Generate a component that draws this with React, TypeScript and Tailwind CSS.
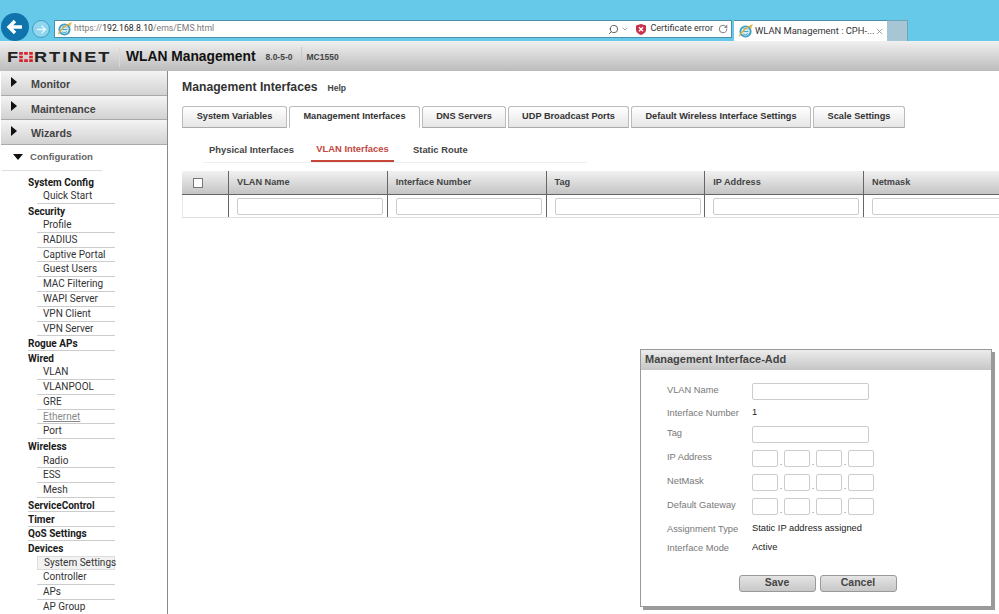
import type { ReactNode } from "react";
import { ChevronDown, RotateCw, Search, X } from "lucide-react";

const sans = "font-['Liberation_Sans',Arial,sans-serif]";
const navFont = "font-['Roboto',sans-serif]";

type NavEntry = { label: string; head?: boolean; muted?: boolean; active?: boolean; line?: boolean };

const navItems: NavEntry[] = [
  { label: "System Config", head: true },
  { label: "Quick Start" },
  { label: "Security", head: true },
  { label: "Profile" },
  { label: "RADIUS" },
  { label: "Captive Portal" },
  { label: "Guest Users" },
  { label: "MAC Filtering" },
  { label: "WAPI Server" },
  { label: "VPN Client" },
  { label: "VPN Server" },
  { label: "Rogue APs", head: true, line: true },
  { label: "Wired", head: true },
  { label: "VLAN" },
  { label: "VLANPOOL" },
  { label: "GRE" },
  { label: "Ethernet", muted: true },
  { label: "Port" },
  { label: "Wireless", head: true },
  { label: "Radio" },
  { label: "ESS" },
  { label: "Mesh" },
  { label: "ServiceControl", head: true, line: true },
  { label: "Timer", head: true, line: true },
  { label: "QoS Settings", head: true, line: true },
  { label: "Devices", head: true },
  { label: "System Settings", active: true },
  { label: "Controller" },
  { label: "APs" },
  { label: "AP Group" },
];

const tabs = [
  { label: "System Variables", width: "w-[105px]" },
  { label: "Management Interfaces", width: "w-[131px]", active: true },
  { label: "DNS Servers", width: "w-[84px]" },
  { label: "UDP Broadcast Ports", width: "w-[121px]" },
  { label: "Default Wireless Interface Settings", width: "w-[180px]" },
  { label: "Scale Settings", width: "w-[92px]" },
];

const columns = ["VLAN Name", "Interface Number", "Tag", "IP Address", "Netmask"];

function GlobeIcon() {
  return (
    <svg viewBox="0 0 16 16" className="h-[15px] w-[15px] shrink-0">
      <circle cx="8" cy="8" r="5.5" fill="#d8eef5" stroke="#3f9fc4" strokeWidth="2" />
      <path d="M5 8h6M5.5 5.5c2-1.5 4-1 5 .5M5.5 10.5c2 1.5 4 1 5-.5" stroke="#3f9fc4" strokeWidth="1" fill="none" />
      <path d="M1.5 13C3 9 9 3 14.5 1.5c-1 1.5-1 2.5-.5 3.5" stroke="#e2b13c" strokeWidth="1.4" fill="none" />
    </svg>
  );
}

function BrowserBar() {
  return (
    <div className="relative flex h-[41px] shrink-0 items-end bg-[#67c9ea] pl-[54px]">
      <div className="absolute left-[1px] top-[13px] flex h-[28px] w-[28px] items-center justify-center rounded-full bg-[#0f74ab]">
        <svg viewBox="0 0 20 20" className="h-[20px] w-[20px]">
          <path d="M17 10H5M10 4l-6 6 6 6" stroke="#fff" strokeWidth="3.4" fill="none" />
        </svg>
      </div>
      <div className="absolute left-[32px] top-[20px] flex h-[18px] w-[18px] items-center justify-center rounded-full border border-[#3f9fc4] bg-[#8fd6ee]">
        <svg viewBox="0 0 20 20" className="h-[13px] w-[13px]">
          <path d="M3 10h12M10 4l6 6-6 6" stroke="#eaf8fd" strokeWidth="2" fill="none" />
        </svg>
      </div>

      <div className="mb-[3px] flex h-[18px] w-[678px] items-center border border-[#4b8fa8] bg-white pl-[2px] pr-[3px]">
        <GlobeIcon />
        <span className={`ml-[2px] text-[8.7px] text-[#7a7a7a] ${navFont}`}>
          https://<span className="text-[#222]">192.168.8.10</span>/ems/EMS.html
        </span>
        <div className="ml-auto flex items-center">
          <Search className="h-[11px] w-[11px] -scale-x-100 text-[#555]" />
          <ChevronDown className="ml-[2px] h-[8px] w-[8px] text-[#777]" />
          <svg viewBox="0 0 10 11" className="ml-[7px] h-[11px] w-[10px]">
            <path d="M5 0l5 1.5V6c0 2.5-2.5 4-5 5-2.5-1-5-2.5-5-5V1.5z" fill="#c9304a" />
            <path d="M3 3.2l4 4M7 3.2l-4 4" stroke="#fff" strokeWidth="1.4" />
          </svg>
          <span className={`ml-[4px] text-[9px] text-[#333] ${navFont}`}>Certificate error</span>
          <RotateCw className="ml-[5px] h-[10px] w-[10px] text-[#666]" />
        </div>
      </div>

      <div className="ml-[2px] flex h-[21px] w-[153px] items-center border-t border-[#4b8fa8] bg-white pl-[4px] pr-[3px]">
        <GlobeIcon />
        <span className={`ml-[2px] whitespace-nowrap text-[9.4px] text-[#333] ${navFont}`}>WLAN Management : CPH-...</span>
        <X className="ml-auto h-[9px] w-[9px] text-[#888]" />
      </div>
      <div className="h-[21px] w-[21px] border-r border-t border-[#6fa4b8] bg-[#a6c6d6]" />
    </div>
  );
}

function AppHeader() {
  return (
    <div className={`flex h-[30px] shrink-0 items-center bg-gradient-to-b from-[#f0f0f0] to-[#bcbcbc] pl-[7px] pt-[2px] ${sans}`}>
      <div className="flex w-[108px] items-center text-[#222]">
        <span className="inline-block w-[12px] origin-left scale-x-[1.3] text-[14px] font-bold leading-none">F</span>
        <svg viewBox="0 0 15 11" className="h-[10px] w-[14px] shrink-0">
          <path d="M0 0h4v3H0zM5.5 0h4v3h-4zM11 0h4v3h-4zM0 4h4v3H0zM11 4h4v3h-4zM0 8h4v3H0zM5.5 8h4v3h-4zM11 8h4v3h-4z" fill="#d8232a" />
        </svg>
        <span className="ml-[1px] inline-block w-[77px] origin-left scale-x-[1.3] whitespace-nowrap text-[14px] font-bold leading-none tracking-[1.5px]">RTINET</span>
      </div>
      <div className="ml-[4px] h-[20px] w-px bg-[#d8d8d8]" />
      <span className="ml-[6px] text-[13.8px] font-bold text-[#111]">WLAN Management</span>
      <span className="ml-[10px] text-[8.5px] font-bold text-[#444]">8.0-5-0</span>
      <div className="ml-[9px] h-[20px] w-px bg-[#c8c8c8]" />
      <span className="ml-[4px] text-[8.5px] font-bold text-[#444]">MC1550</span>
    </div>
  );
}

function TopNavRow({ label }: { label: string }) {
  return (
    <div className="flex h-[24.5px] shrink-0 items-center border-b border-[#a9a9a9] bg-gradient-to-b from-[#f4f4f4] to-[#d2d2d2] pl-[10px]">
      <svg viewBox="0 0 6 10" className="mb-[2px] h-[10px] w-[6px]">
        <path d="M0 0l6 5-6 5z" fill="#111" />
      </svg>
      <span className={`ml-[14px] pt-[3px] text-[10.7px] font-bold text-[#444] ${sans}`}>{label}</span>
    </div>
  );
}

function Sidebar() {
  return (
    <aside className="flex w-[168px] shrink-0 flex-col overflow-hidden border-r border-[#8a8a8a] pl-px">
      <TopNavRow label="Monitor" />
      <TopNavRow label="Maintenance" />
      <TopNavRow label="Wizards" />
      <div className="flex h-[25px] shrink-0 items-center">
        <svg viewBox="0 0 10 6" className="ml-[12px] h-[6px] w-[10px]">
          <path d="M0 0h10L5 6z" fill="#111" />
        </svg>
        <span className={`ml-[7px] text-[9.6px] font-bold text-[#666] ${sans}`}>Configuration</span>
      </div>
      <div className="ml-[1px] w-[100px] shrink-0 border-t border-[#ddd]" />
      <nav className={`mt-[4px] flex shrink-0 flex-col pl-[27px] text-[10px] ${navFont}`}>
        {navItems.map((item) =>
          item.head ? (
            <div
              key={item.label}
              className={`flex h-[14.4px] w-[87px] shrink-0 items-center whitespace-nowrap pt-[2px] font-bold leading-none text-[#1a1a1a] ${item.line ? "border-b border-[#ccc]" : ""}`}
            >
              {item.label}
            </div>
          ) : (
            <div
              key={item.label}
              className={`ml-[9px] flex h-[14.8px] w-[78px] shrink-0 items-center whitespace-nowrap border-b border-[#ccc] pl-[6px] leading-none ${
                item.muted ? "text-[#8a8a8a] underline" : "text-[#333]"
              } ${item.active ? "border-x border-t border-[#ddd] bg-[#f2f2f2]" : ""}`}
            >
              {item.label}
            </div>
          ),
        )}
      </nav>
    </aside>
  );
}

function TabBar() {
  return (
    <div className="mt-[11px] flex gap-[2px] pl-[14px]">
      {tabs.map((tab) => (
        <div
          key={tab.label}
          className={`flex h-[22px] ${tab.width} items-center justify-center rounded-t-[3px] border border-[#bbb] text-[9.2px] font-bold text-[#333] ${
            tab.active ? "border-b-white bg-white" : "border-b-[#aaa] bg-gradient-to-b from-white to-[#e6e6e6]"
          }`}
        >
          {tab.label}
        </div>
      ))}
    </div>
  );
}

function SubTabs() {
  return (
    <div className="ml-[35px] flex h-[35px] w-[384px] border-b border-[#eee] pl-[6px] text-[9.4px] font-bold text-[#444]">
      <div className="flex w-[102px] items-center pt-[10px]">Physical Interfaces</div>
      <div className="flex w-[83px] items-center justify-center border-b-[2px] border-[#c8453a] pt-[10px] text-[#c2473f]">VLAN Interfaces</div>
      <div className="ml-[19px] flex items-center pt-[10px]">Static Route</div>
    </div>
  );
}

function VlanTable() {
  return (
    <div className="ml-[14px] mt-[8px] w-[900px] text-[9.2px] font-bold text-[#444]">
      <div className="flex h-[24px] border-b border-[#666] bg-gradient-to-b from-[#f2f2f2] to-[#c4c4c4]">
        <div className="flex w-[46px] items-center pl-[11px]">
          <div className="h-[10px] w-[10px] border border-[#777] bg-white" />
        </div>
        {columns.map((col) => (
          <div key={col} className="flex w-[158.75px] items-center border-l border-[#666] pl-[8px]">
            {col}
          </div>
        ))}
      </div>
      <div className="flex h-[23px] border-b border-[#e2e2e2]">
        <div className="w-[46px] border-l border-[#e8e8e8]" />
        {columns.map((col) => (
          <div key={col} className="flex w-[158.75px] items-center border-l border-[#666] pl-[8px]">
            <div className="h-[17px] w-[146px] rounded-[2px] border border-[#ccc] bg-white" />
          </div>
        ))}
      </div>
    </div>
  );
}

function IpFields() {
  return (
    <div className="flex items-end">
      {[0, 1, 2, 3].map((i) => (
        <div key={i} className="flex items-end">
          {i > 0 && <span className="w-[6px] text-center text-[9px] leading-[10px] text-[#777]">.</span>}
          <div className="h-[17px] w-[26px] rounded-[2px] border border-[#ccc] bg-white" />
        </div>
      ))}
    </div>
  );
}

function TextField() {
  return <div className="h-[17px] w-[117px] rounded-[2px] border border-[#ccc] bg-white" />;
}

function FormRow({ label, gap, children }: { label: string; gap: string; children: ReactNode }) {
  return (
    <div className={`flex h-[18px] shrink-0 items-center ${gap}`}>
      <span className="w-[85px] whitespace-nowrap pb-[1px] text-[#777]">{label}</span>
      <div className="text-[#222]">{children}</div>
    </div>
  );
}

function AddDialog() {
  return (
    <div className={`absolute left-[640px] top-[349px] flex h-[258px] w-[352px] flex-col border border-[#999] bg-white text-[9.3px] shadow-[3px_3px_0_#9a9a9a] ${sans}`}>
      <div className="flex h-[20px] shrink-0 items-center bg-gradient-to-b from-[#ececec] to-[#c6c6c6] pb-[1px] pl-[4px] text-[11px] font-bold text-[#444]">
        Management Interface-Add
      </div>
      <div className="flex flex-col pl-[26px] pt-[12px]">
        <FormRow label="VLAN Name" gap="mt-0"><TextField /></FormRow>
        <FormRow label="Interface Number" gap="mt-[5.5px]"><span className="block pb-[3px]">1</span></FormRow>
        <FormRow label="Tag" gap="mt-[2px]"><TextField /></FormRow>
        <FormRow label="IP Address" gap="mt-[6px]"><IpFields /></FormRow>
        <FormRow label="NetMask" gap="mt-[6px]"><IpFields /></FormRow>
        <FormRow label="Default Gateway" gap="mt-[6px]"><IpFields /></FormRow>
        <FormRow label="Assignment Type" gap="mt-[6px]"><span className="block pb-[3px]">Static IP address assigned</span></FormRow>
        <FormRow label="Interface Mode" gap="mt-[1px]"><span className="block pb-[3px]">Active</span></FormRow>
      </div>
      <div className="mt-[16px] flex justify-center gap-[4px] pl-[3px] text-[10.5px] font-bold text-[#444]">
        <div className="flex h-[17px] w-[77px] items-center justify-center rounded-[3px] border border-[#999] bg-gradient-to-b from-[#e4e4e4] to-[#c8c8c8]">Save</div>
        <div className="flex h-[17px] w-[77px] items-center justify-center rounded-[3px] border border-[#999] bg-gradient-to-b from-[#e4e4e4] to-[#c8c8c8]">Cancel</div>
      </div>
    </div>
  );
}

export default function App() {
  return (
    <div className="relative flex h-[614px] w-[999px] flex-col overflow-hidden bg-white">
      <BrowserBar />
      <AppHeader />
      <div className="flex min-h-0 flex-1">
        <Sidebar />
        <main className={`min-w-0 flex-1 overflow-hidden ${sans}`}>
          <div className="ml-[14px] mt-[9px] flex items-baseline">
            <h1 className="text-[12.2px] font-bold leading-[14px] text-[#333]">Management Interfaces</h1>
            <span className="ml-[10px] text-[8.6px] font-bold leading-[14px] text-[#444]">Help</span>
          </div>
          <TabBar />
          <SubTabs />
          <VlanTable />
        </main>
      </div>
      <AddDialog />
    </div>
  );
}
